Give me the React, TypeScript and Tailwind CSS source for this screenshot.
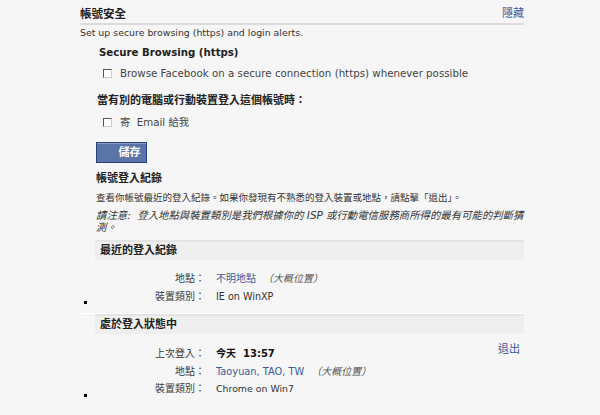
import React from "react"

function Checkbox() {
  return (
    <span className="inline-block w-[9px] h-[9px] border border-t-[#555] border-l-[#555] border-r-[#ccc] border-b-[#ccc] bg-white shrink-0" />
  )
}

interface Row {
  label: string
  value: React.ReactNode
}

function LoginBlock({ title, rows, action, top }: { title: string; rows: Row[]; action?: string; top: string }) {
  return (
    <div>
      <div className="ml-[15px] h-[20px] flex items-center pl-[5px] bg-[#efefef] border-t-2 border-[#e4e4e4] font-bold text-[11px] leading-[14px] text-[#222]">
        {title}
      </div>
      <div className="flex items-end">
        <div className="w-[16px] shrink-0 pb-[1px] pl-[4px]">
          <div className="w-[3px] h-[3px] bg-black" />
        </div>
        <div className={`flex-1 relative ${top}`}>
          <div className="grid grid-cols-[109px_1fr] gap-x-[11px] text-[10px] leading-[17.5px]">
            {rows.map((r) => (
              <React.Fragment key={r.label}>
                <div className="text-right text-[#3a3a3a]">{r.label}</div>
                <div>{r.value}</div>
              </React.Fragment>
            ))}
          </div>
          {action && (
            <a className="absolute right-[4px] top-[9px] text-[11px] leading-[14px] text-[#3b5998]">{action}</a>
          )}
        </div>
      </div>
    </div>
  )
}

export default function App() {
  const approx = <span className="italic text-[#555] ml-[7px]">（大概位置）</span>

  return (
    <div className="w-[600px] h-[415px] overflow-hidden bg-[#f6f6f6] text-[#333] font-['DejaVu_Sans','Noto_Sans_CJK_TC',sans-serif]">
      <div className="ml-[80px] w-[444px] pt-[7px]">
        {/* Header */}
        <div className="flex justify-between items-center border-b-2 border-[#dcdcdc] pb-[2px] leading-[14px]">
          <span className="font-bold text-[11.5px] text-[#222]">帳號安全</span>
          <a className="text-[11px] text-[#3b5998]">隱藏</a>
        </div>
        <p className="text-[9.4px] mt-[1px] leading-[14px]">Set up secure browsing (https) and login alerts.</p>

        <div className="ml-[16px]">
          {/* Secure browsing */}
          <div className="mt-[6px] ml-[3px] font-bold text-[10.2px] leading-[14px] text-[#222]">Secure Browsing (https)</div>
          <label className="flex items-center gap-[8px] ml-[7px] mt-[6px] text-[10.25px] leading-[14px] text-[#444]">
            <Checkbox />
            <span>Browse Facebook on a secure connection (https) whenever possible</span>
          </label>

          {/* Login alerts */}
          <div className="mt-[14px] ml-[1px] font-bold text-[11px] leading-[14px] text-[#222]">當有別的電腦或行動裝置登入這個帳號時：</div>
          <label className="flex items-center gap-[8px] ml-[7px] mt-[7px] text-[10.25px] leading-[14px] text-[#444]">
            <Checkbox />
            <span>寄&nbsp; Email 給我</span>
          </label>

          <button className="block mt-[13px] w-[51px] h-[21px] pl-[16px] bg-[#5b74a8] border border-[#29447e] shadow-[inset_0_1px_0_#8a9cc2] text-white font-bold text-[11px] leading-[14px]">
            儲存
          </button>

          {/* Login history */}
          <div className="mt-[9px] font-bold text-[11px] leading-[14px] text-[#222]">帳號登入紀錄</div>
          <p className="mt-[5px] text-[9.5px] leading-[14px]">查看你帳號最近的登入紀錄。如果你發現有不熟悉的登入裝置或地點，請點擊「退出」。</p>
          <p className="mt-[4px] text-[10.4px] leading-[12px] italic">
            <span className="block whitespace-nowrap">請注意:&nbsp; 登入地點與裝置類別是我們根據你的 ISP 或行動電信服務商所得的最有可能的判斷猜</span>
            <span className="block">測。</span>
          </p>
        </div>

        <div className="mt-[7px]">
          <LoginBlock
            title="最近的登入紀錄"
            top="pt-[10px]"
            rows={[
              { label: "地點：", value: <span><span className="text-[#3b5998]">不明地點</span>{approx}</span> },
              { label: "裝置類別：", value: <span className="text-[9.6px]">IE on WinXP</span> },
            ]}
          />
          <div className="mt-[8px] border-t border-white" />
          <LoginBlock
            title="處於登入狀態中"
            action="退出"
            top="pt-[11px]"
            rows={[
              { label: "上次登入：", value: <span className="font-bold text-[#111]">今天&nbsp; 13:57</span> },
              { label: "地點：", value: <span><span className="text-[#3b5998] text-[9.8px]">Taoyuan, TAO, TW</span>{approx}</span> },
              { label: "裝置類別：", value: <span className="text-[9.4px]">Chrome on Win7</span> },
            ]}
          />
        </div>
      </div>
    </div>
  )
}
